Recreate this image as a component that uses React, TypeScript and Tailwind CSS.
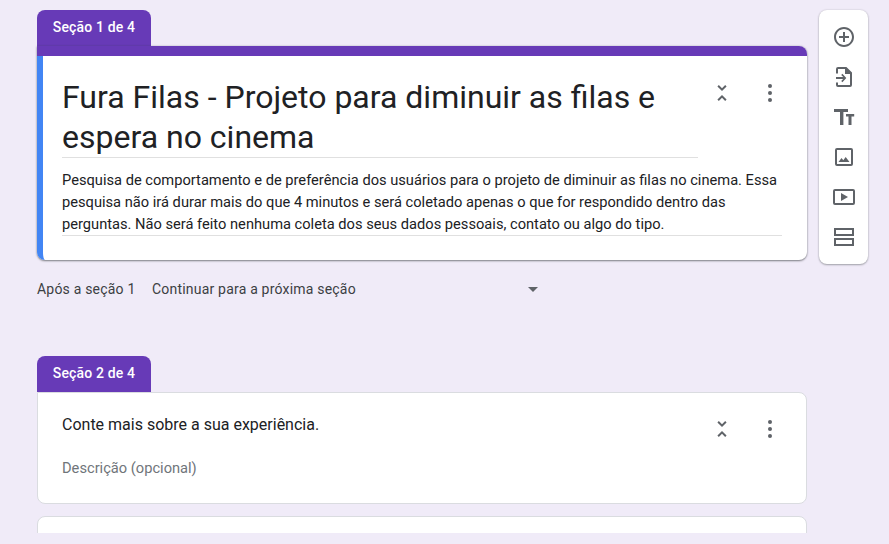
const font = { fontFamily: 'Roboto, sans-serif' };

function CollapseIcon() {
  return (
    <svg width="24" height="24" viewBox="0 0 24 24" fill="#5f6368">
      <path d="M7.41 18.59L8.83 20 12 16.83 15.17 20l1.41-1.41L12 14l-4.59 4.59zm9.18-13.18L15.17 4 12 7.17 8.83 4 7.41 5.41 12 10l4.59-4.59z" />
    </svg>
  );
}

function MoreIcon() {
  return (
    <svg width="24" height="24" viewBox="0 0 24 24" fill="#5f6368">
      <circle cx="12" cy="5" r="2" />
      <circle cx="12" cy="12" r="2" />
      <circle cx="12" cy="19" r="2" />
    </svg>
  );
}

function CardActions() {
  return (
    <div className="flex items-center gap-[24px]">
      <CollapseIcon />
      <MoreIcon />
    </div>
  );
}

function SectionTab({ label }: { label: string }) {
  return (
    <div className="flex h-[36px] w-[114px] items-center justify-center rounded-t-[8px] bg-[#673ab7] pb-[1px] text-[14px] font-medium tracking-[0.15px] text-white">
      {label}
    </div>
  );
}

function Toolbar() {
  return (
    <div className="flex h-[254px] w-[49px] flex-col items-center gap-[16px] rounded-[8px] bg-white pt-[15px] shadow-[0_1px_2px_rgba(60,64,67,0.4),0_0_2px_rgba(60,64,67,0.2)]">
      <svg width="24" height="24" viewBox="0 0 24 24" fill="#5f6368">
        <path d="M13 7h-2v4H7v2h4v4h2v-4h4v-2h-4V7zm-1-5C6.48 2 2 6.48 2 12s4.48 10 10 10 10-4.48 10-10S17.52 2 12 2zm0 18c-4.41 0-8-3.59-8-8s3.59-8 8-8 8 3.59 8 8-3.59 8-8 8z" />
      </svg>
      <svg width="24" height="24" viewBox="0 0 24 24" fill="#5f6368">
        <path d="M6 2h8.4L20 7.6V20a2 2 0 0 1-2 2H6a2 2 0 0 1-2-2v-2.5h2V20h12V9h-5V4H6v4.5H4V4a2 2 0 0 1 2-2z" />
        <path d="M4 12h7.2L9.2 10l1.2-1.2 3.9 4.2-3.9 4.2-1.2-1.2 2-2H4z" />
      </svg>
      <svg width="24" height="24" viewBox="0 0 24 24" fill="#5f6368">
        <path d="M2 4h14v3h-4.6v13H8V7H2zM14 9h8.2v2.6h-2.7V20h-3v-8.4H14z" />
      </svg>
      <svg width="24" height="24" viewBox="0 0 24 24" fill="#5f6368">
        <path d="M19 3H5a2 2 0 0 0-2 2v14a2 2 0 0 0 2 2h14a2 2 0 0 0 2-2V5a2 2 0 0 0-2-2zm0 16H5V5h14v14z" />
        <path d="M6.5 17l3-4 1.8 2.2 2.4-3.2L17.5 17z" />
      </svg>
      <svg width="24" height="24" viewBox="0 0 24 24" fill="#5f6368">
        <path d="M21 4H3a2 2 0 0 0-2 2v12a2 2 0 0 0 2 2h18a2 2 0 0 0 2-2V6a2 2 0 0 0-2-2zm0 14H3V6h18v12z" />
        <path d="M9 8v8l7-4z" />
      </svg>
      <svg width="24" height="24" viewBox="0 0 24 24" fill="#5f6368">
        <path d="M2 3h20v8H2zm2 2v4h16V5zM2 13h20v8H2zm2 2v4h16v-4z" fillRule="evenodd" />
      </svg>
    </div>
  );
}

export default function App() {
  return (
    <div style={font} className="h-[544px] w-[889px] overflow-hidden bg-[#f0ebf8]">
      <div className="flex h-[533px] items-start gap-[12px] overflow-hidden pl-[37px] pt-[10px]">
        <div className="w-[770px]">
          <SectionTab label="Seção 1 de 4" />
          <div className="h-[214px] rounded-[8px] rounded-tl-none bg-white shadow-[0_1px_2px_rgba(60,64,67,0.6),0_0_2px_rgba(60,64,67,0.25)]">
            <div className="h-[10px] rounded-tr-[8px] bg-[#673ab7]" />
            <div className="flex h-[204px] rounded-b-[8px] border-l-[6px] border-[#4285f4] pl-[19px] pr-[25px]">
              <div className="flex-1">
                <div className="flex items-start justify-between">
                  <h1 className="w-[636px] border-b border-[#e0e0e0] pt-[21px] text-[32px] leading-[40px] text-[#202124]">
                    Fura Filas - Projeto para diminuir as filas e espera no cinema
                  </h1>
                  <div className="mt-[25px]">
                    <CardActions />
                  </div>
                </div>
                <p className="mt-[11px] border-b border-[#e0e0e0] text-[14.67px] leading-[22px] text-[#202124]">
                  Pesquisa de comportamento e de preferência dos usuários para o projeto de diminuir as filas no cinema. Essa pesquisa não irá durar mais do que 4 minutos e será coletado apenas o que for respondido dentro das perguntas. Não será feito nenhuma coleta dos seus dados pessoais, contato ou algo do tipo.
                </p>
              </div>
            </div>
          </div>

          <div className="mt-[18px] flex h-[22px] items-center text-[14px] tracking-[0.2px] text-[#202124]">
            <span className="w-[115px] text-[#3c4043]">Após a seção 1</span>
            <span className="w-[376px] text-[#3c4043]">Continuar para a próxima seção</span>
            <span className="h-0 w-0 border-x-[5px] border-t-[5px] border-x-transparent border-t-[#5f6368]" />
          </div>

          <div className="mt-[56px]">
            <SectionTab label="Seção 2 de 4" />
          </div>
          <div className="flex h-[112px] items-start justify-between rounded-[8px] rounded-tl-none border border-[#dadce0] bg-white pl-[24px] pr-[24px]">
            <div>
              <p className="mt-[21px] text-[16px] leading-[22px] text-[#202124]">Conte mais sobre a sua experiência.</p>
              <p className="mt-[21px] text-[14.67px] leading-[22px] text-[#70757a]">Descrição (opcional)</p>
            </div>
            <div className="mt-[24px]">
              <CardActions />
            </div>
          </div>
          <div className="mt-[12px] h-[40px] rounded-[8px] border border-[#dadce0] bg-white" />
        </div>
        <Toolbar />
      </div>
    </div>
  );
}
